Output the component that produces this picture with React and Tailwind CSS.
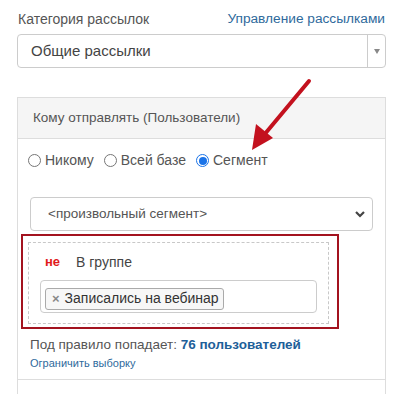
import React from "react";

function Radio({ checked, label }) {
  return (
    <label className="flex items-center gap-[4px]">
      <span
        className={
          "w-[13px] h-[13px] rounded-full border flex items-center justify-center " +
          (checked ? "border-[#1a73e8]" : "border-[#767676]")
        }
      >
        {checked && <span className="w-[8px] h-[8px] rounded-full bg-[#1a73e8]" />}
      </span>
      <span>{label}</span>
    </label>
  );
}

export default function App() {
  return (
    <div className="relative w-[413px] h-[394px] bg-white overflow-hidden font-['Liberation_Sans',Arial,sans-serif] text-[#555]">
      <div className="pl-[17px] pr-[27px] pt-[10px]">
        {/* Category */}
        <div className="flex items-center justify-between text-[14px] h-[18px] px-[1px]">
          <span className="text-[#555]">Категория рассылок</span>
          <a className="text-[#2f6a9c] text-[13.7px]">Управление рассылками</a>
        </div>
        <div className="mt-[6px] h-[34px] flex border border-[#ccc] rounded-[4px]">
          <div className="flex-1 flex items-center pl-[13px] text-[15px] text-[#444]">Общие рассылки</div>
          <div className="w-[18px] border-l border-[#ccc] flex items-center justify-center">
            <span className="block w-0 h-0 border-l-[3px] border-r-[3px] border-t-[5px] border-l-transparent border-r-transparent border-t-[#888]" />
          </div>
        </div>

        {/* Panel */}
        <div className="mt-[29px] border-x border-t border-[#ddd]">
          <div className="h-[41px] bg-[#f5f5f5] border-b border-[#ddd] flex items-center pl-[15px] text-[13.5px] text-[#555]">
            Кому отправлять (Пользователи)
          </div>
          <div className="pt-[11px]">
            <div className="flex items-center gap-[10px] pl-[10px] text-[14px] text-[#555]">
              <Radio label="Никому" />
              <Radio label="Всей базе" />
              <Radio checked label="Сегмент" />
            </div>
            <div className="mx-[12px] mt-[26px] h-[34px] border border-[#ccc] rounded-[4px] flex items-center justify-between pl-[17px] pr-[6px] text-[13.5px] text-[#555]">
              <span>&lt;произвольный сегмент&gt;</span>
              <svg width="12" height="12" viewBox="0 0 12 12">
                <path d="M2 4l4 4 4-4" fill="none" stroke="#444" strokeWidth="2.2" />
              </svg>
            </div>
            <div className="ml-[3px] mt-[3px] w-[318px] h-[95px] border-2 border-[#a3131f] pt-[6px] pl-[5px]">
              <div className="w-[301px] h-[82px] border border-dashed border-[#c8c8c8] pt-[8px] pl-[11px]">
                <div className="flex items-center h-[22px] text-[14px]">
                  <span className="text-[#e01a1a] font-bold text-[13px] pl-[5px] w-[36px]">не</span>
                  <span className="text-[#444]">В группе</span>
                </div>
                <div className="mt-[7px] w-[277px] h-[33px] border border-[#ccc] rounded-[4px] pl-[4px] pt-[5px]">
                  <div className="inline-flex items-center h-[22px] border border-[#aaa] rounded-[3px] bg-[#f7f7f7] pl-[6px] pr-[4px] text-[14px] text-[#333]">
                    <span className="text-[#888] font-bold text-[13px] mr-[5px]">×</span>
                    Записались на вебинар
                  </div>
                </div>
              </div>
            </div>
            <div className="pl-[12px] pt-[7px] text-[13.5px] text-[#555] leading-[18px]">
              Под правило попадает: <b className="text-[#1e5f99]">76 пользователей</b>
            </div>
            <div className="pl-[12px] text-[11px] text-[#2f6a9c] leading-[16px] pt-[1px]">Ограничить выборку</div>
            <div className="mt-[8px] border-b border-[#ddd]" />
            <div className="h-[20px]" />
          </div>
        </div>
      </div>

      {/* Annotation arrow */}
      <svg className="absolute left-0 top-0 pointer-events-none" width="413" height="394">
        <path d="M309 81 L264 135" stroke="#c3111e" strokeWidth="4" strokeLinecap="round" fill="none" />
        <path d="M252 150 L256 124 L273 138 Z" fill="#c3111e" />
      </svg>
    </div>
  );
}
